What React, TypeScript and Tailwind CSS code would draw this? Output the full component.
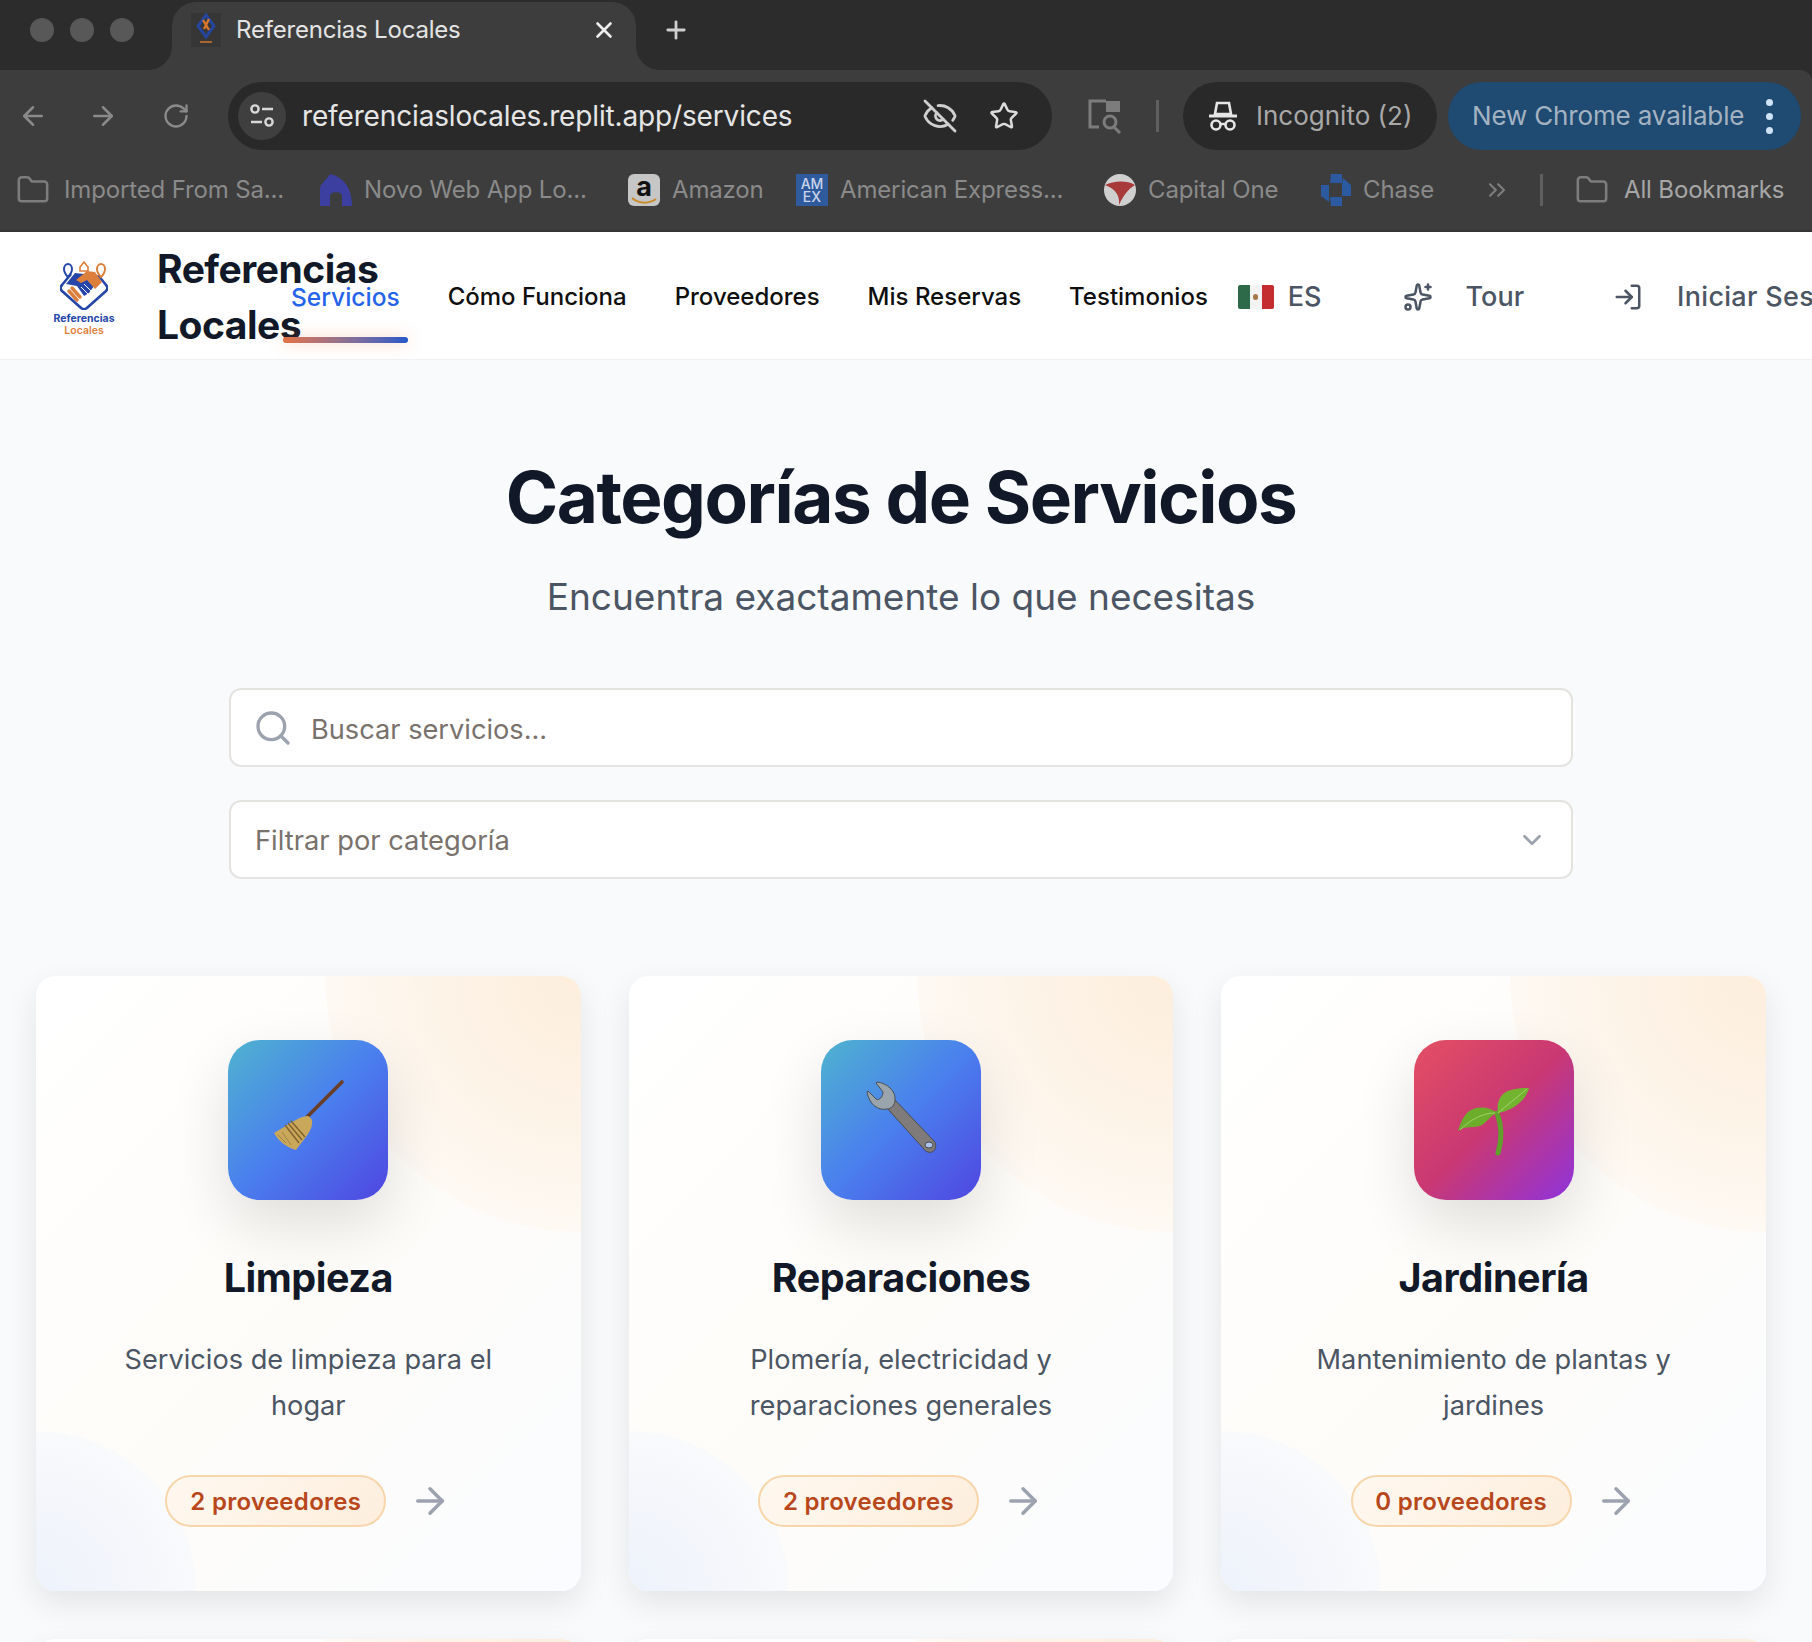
import React from 'react';
import {
  ArrowLeft,
  ArrowRight,
  RotateCw,
  X,
  Plus,
  EyeOff,
  Star,
  Search,
  ChevronDown,
  Sparkles,
  LogIn,
  Folder,
  ChevronsRight,
} from 'lucide-react';

const Bookmark: React.FC<{ icon: React.ReactNode; label: string; className?: string }> = ({ icon, label, className }) => (
  <div className={`flex items-center shrink-0 ${className ?? ''}`}>
    {icon}
    <span className="ml-[12px] text-[24px] leading-none tracking-[-0.15px] text-[#8a8a8a] whitespace-nowrap">{label}</span>
  </div>
);

const ChromeBar: React.FC = () => (
  <div className="bg-[#2c2c2c] h-[232px] shrink-0">
    {/* Tab strip */}
    <div className="h-[70px] flex items-end">
      <div className="flex items-center gap-[16px] pl-[30px] pb-[10px] w-[172px] h-full shrink-0">
        <span className="w-[24px] h-[24px] rounded-full bg-[#585858]" />
        <span className="w-[24px] h-[24px] rounded-full bg-[#585858]" />
        <span className="w-[24px] h-[24px] rounded-full bg-[#585858]" />
      </div>
      <div className="relative w-[464px] h-[68px] bg-[#3d3d3d] rounded-t-[24px] flex items-center pl-[18px] pb-[12px] shrink-0">
        <span className="absolute left-[-24px] bottom-0 w-[24px] h-[24px] bg-[#3d3d3d]">
          <span className="block w-full h-full bg-[#2c2c2c] rounded-br-[24px]" />
        </span>
        <span className="absolute right-[-24px] bottom-0 w-[24px] h-[24px] bg-[#3d3d3d]">
          <span className="block w-full h-full bg-[#2c2c2c] rounded-bl-[24px]" />
        </span>
        <svg width="32" height="36" viewBox="0 0 32 36" className="shrink-0">
          <rect x="1" y="1" width="30" height="34" fill="#363636" />
          <path d="M16 3 L24 14 L16 25 L8 14 Z" fill="none" stroke="#26459c" strokeWidth="3" />
          <path d="M13 8 L19 18 M19 7 L14 17" stroke="#d9772f" strokeWidth="2.4" />
          <rect x="10" y="29" width="12" height="2" fill="#a8652e" />
        </svg>
        <span className="ml-[14px] text-[24px] leading-none tracking-[-0.2px] text-[#e4e4e4] whitespace-nowrap">Referencias Locales</span>
        <X className="ml-auto mr-[19px] text-[#eeeeee]" size={26} strokeWidth={2.4} />
      </div>
      <Plus className="ml-[26px] mb-[26px] text-[#cfcfcf]" size={28} strokeWidth={2.4} />
    </div>

    {/* Toolbar and bookmarks */}
    <div className="h-[162px] bg-[#3d3d3d] rounded-tr-[12px] border-b-2 border-[#353535]">
      <div className="h-[80px] pt-[12px] flex items-center">
        <ArrowLeft className="ml-[18px] text-[#8a8a8a] shrink-0" size={30} strokeWidth={2} />
        <ArrowRight className="ml-[40px] text-[#8a8a8a] shrink-0" size={30} strokeWidth={2} />
        <RotateCw className="ml-[44px] text-[#8a8a8a] shrink-0" size={28} strokeWidth={2} />
        <div className="ml-[38px] w-[824px] h-[68px] rounded-full bg-[#292929] flex items-center pl-[10px] shrink-0">
          <span className="w-[48px] h-[48px] rounded-full bg-[#3f3f3f] flex items-center justify-center shrink-0">
            <svg width="26" height="26" viewBox="0 0 26 26" fill="none" stroke="#d8d8d8" strokeWidth="2.4">
              <circle cx="6" cy="6" r="3.6" />
              <path d="M13 6 H24 M2 19 H13" />
              <circle cx="20" cy="19" r="3.6" />
            </svg>
          </span>
          <span className="ml-[16px] text-[28px] leading-none tracking-[-0.15px] text-[#e6e6e6] whitespace-nowrap">referenciaslocales.replit.app/services</span>
          <EyeOff className="ml-auto text-[#cfcfcf] shrink-0" size={36} strokeWidth={1.9} />
          <Star className="ml-[31px] mr-[33px] text-[#dcdcdc] shrink-0" size={30} strokeWidth={2} />
        </div>
        <svg width="36" height="36" viewBox="0 0 36 36" fill="none" className="ml-[34px] shrink-0">
          <path d="M20 3 H4 V29 H13" stroke="#7c7c7c" strokeWidth="3" />
          <path d="M20 3 H34 V14 H20 Z" fill="#7c7c7c" />
          <circle cx="24" cy="24" r="6" stroke="#7c7c7c" strokeWidth="3" />
          <path d="M28 29 L34 35" stroke="#7c7c7c" strokeWidth="3" />
        </svg>
        <span className="ml-[34px] w-[3px] h-[32px] bg-[#5f5f5f] shrink-0" />
        <div className="ml-[24px] w-[254px] h-[68px] rounded-full bg-[#292929] flex items-center pl-[26px] shrink-0">
          <svg width="28" height="32" viewBox="0 0 28 32" fill="none" className="shrink-0">
            <path d="M8 3 H20 L22 14 H6 Z" stroke="#e6e6e6" strokeWidth="2.6" />
            <path d="M0 16 H28" stroke="#e6e6e6" strokeWidth="3" />
            <circle cx="7" cy="25" r="4.5" stroke="#e6e6e6" strokeWidth="2.6" />
            <circle cx="21" cy="25" r="4.5" stroke="#e6e6e6" strokeWidth="2.6" />
            <path d="M11 24 H17" stroke="#e6e6e6" strokeWidth="2.4" />
          </svg>
          <span className="ml-[19px] text-[26px] leading-none text-[#a8a8a8] whitespace-nowrap">Incognito (2)</span>
        </div>
        <div className="ml-[11px] w-[353px] h-[68px] rounded-full bg-[#1f4a72] flex items-center pl-[24px] shrink-0">
          <span className="text-[26px] leading-none tracking-[-0.15px] text-[#a4b3c2] whitespace-nowrap">New Chrome available</span>
          <span className="ml-auto mr-[28px] flex flex-col gap-[7px]">
            <span className="w-[7px] h-[7px] rounded-full bg-[#cfe3f7]" />
            <span className="w-[7px] h-[7px] rounded-full bg-[#cfe3f7]" />
            <span className="w-[7px] h-[7px] rounded-full bg-[#cfe3f7]" />
          </span>
        </div>
      </div>
      <div className="h-[56px] mt-[12px] flex items-center pl-[16px]">
        <Bookmark
          className="w-[304px]"
          label="Imported From Sa..."
          icon={<Folder className="mr-[2px] text-[#7d7d7d] shrink-0" size={34} strokeWidth={1.8} />}
        />
        <Bookmark
          className="w-[308px]"
          label="Novo Web App Lo..."
          icon={
            <svg width="32" height="32" viewBox="0 0 32 32" className="shrink-0">
              <path d="M0 32 V15 C0 9 6 7 10 0 C24 3 32 14 32 32 H22 V22 C22 17 10 17 10 22 V32 Z" fill="#3d3fa0" />
            </svg>
          }
        />
        <Bookmark
          className="w-[168px]"
          label="Amazon"
          icon={
            <span className="relative w-[32px] h-[32px] rounded-[6px] bg-[#c6c6c6] flex items-start justify-center shrink-0 overflow-hidden">
              <span className="text-[27px] leading-[25px] font-bold text-[#111]">a</span>
              <svg width="26" height="8" viewBox="0 0 26 8" className="absolute bottom-[1px] left-[3px]" fill="none">
                <path d="M1 1 C8 7 18 7 25 2" stroke="#c98a2a" strokeWidth="2" />
              </svg>
            </span>
          }
        />
        <Bookmark
          className="w-[308px]"
          label="American Express..."
          icon={
            <span className="w-[32px] h-[32px] bg-[#2f5a9e] flex flex-col items-center justify-center shrink-0 overflow-hidden">
              <span className="text-[14px] leading-[13px] font-medium text-[#c9d5ea]">AM</span>
              <span className="text-[14px] leading-[13px] font-medium text-[#c9d5ea]">EX</span>
            </span>
          }
        />
        <Bookmark
          className="w-[217px]"
          label="Capital One"
          icon={
            <svg width="32" height="32" viewBox="0 0 32 32" className="shrink-0">
              <circle cx="16" cy="16" r="16" fill="#cfcfcf" />
              <path d="M1 11 C10 7 22 6 31 11 C24 15 19 22 15 31 C16 22 12 15 1 11 Z" fill="#a83a3a" />
            </svg>
          }
        />
        <Bookmark
          className="w-[162px]"
          label="Chase"
          icon={
            <svg width="30" height="32" viewBox="0 0 30 32" className="shrink-0" fill="#2b5aa0">
              <path d="M10 0 H21 V9 H9 Z" />
              <path d="M22 4 L30 11 V22 H21 V10 Z" />
              <path d="M9 23 H21 V32 H10 Z" />
              <path d="M0 10 V22 L8 28 V11 H0 Z" />
            </svg>
          }
        />
        <ChevronsRight className="text-[#7d7d7d] shrink-0" size={28} strokeWidth={1.8} />
        <span className="ml-[29px] w-[3px] h-[32px] bg-[#5f5f5f] shrink-0" />
        <Folder className="ml-[32px] text-[#7d7d7d] shrink-0" size={34} strokeWidth={1.8} />
        <span className="ml-[15px] text-[24px] leading-none tracking-[-0.15px] text-[#a6a6a6] whitespace-nowrap">All Bookmarks</span>
      </div>
    </div>
  </div>
);

const Logo: React.FC = () => (
  <div className="flex flex-col items-center w-[64px] shrink-0 mt-[6px]">
    <svg width="48" height="50" viewBox="0 0 48 50" fill="none">
      <path d="M11 14 L2 25 C0 27 0 29 2 31 L20 47 C23 50 25 50 28 47 L46 31 C48 29 48 27 46 25 L38 15" stroke="#2546a8" strokeWidth="2.6" />
      <path d="M12 9 C12 13 8 17 8 17 C8 17 4 13 4 9 C4 6 6 4 8 4 C10 4 12 6 12 9 Z" stroke="#2546a8" strokeWidth="2" />
      <path d="M45 9 C45 13 41 17 41 17 C41 17 37 13 37 9 C37 6 39 4 41 4 C43 4 45 6 45 9 Z" stroke="#dd7f3c" strokeWidth="2" />
      <path d="M20 7 L24 2 L28 7 V11 H20 Z" stroke="#dd7f3c" strokeWidth="1.6" />
      <path d="M6 24 L15 13 L24 14 L34 26 L29 33 L24 36 L17 26 Z" fill="#2546a8" />
      <path d="M16 20 L27 11 L35 12 L42 22 L35 29 L27 20 L21 23 Z" fill="#dd7f3c" />
      <path d="M12 28 L20 37 M9 31 L17 40" stroke="#dd7f3c" strokeWidth="3.4" strokeLinecap="round" />
      <path d="M24 24 L31 31 M21 27 L28 34" stroke="#fff" strokeWidth="1" />
    </svg>
    <span className="mt-[3px] text-[10.5px] leading-[12px] font-bold text-[#2546a8] whitespace-nowrap">Referencias</span>
    <span className="text-[10.5px] leading-[12px] font-semibold text-[#dd7f3c] whitespace-nowrap">Locales</span>
  </div>
);

const NavBar: React.FC = () => (
  <nav className="h-[128px] bg-white border-b border-[#eef0f3] flex items-center pl-[52px] shrink-0 overflow-hidden">
    <Logo />
    <div className="ml-[41px] w-[165px] shrink-0 text-[39px] leading-[56px] font-bold tracking-[-0.5px] text-[#111827] mt-[3px]">
      <span className="whitespace-nowrap">Referencias</span>
      <br />
      Locales
    </div>
    <div className="relative ml-[-31px] text-[24.5px] leading-none font-medium text-[#2563eb] whitespace-nowrap shrink-0 mt-[2px] mb-[-2px]">
      Servicios
      <span className="absolute left-[-8px] right-[-8px] top-[52px] h-[6px] rounded-full bg-gradient-to-r from-[#e5703f] to-[#2456c8] shadow-[0_0_16px_rgba(229,112,63,0.35)]" />
    </div>
    <div className="ml-[48px] flex items-center gap-[48px] shrink-0 text-[24px] leading-none font-medium text-[#0f0f0f] mt-[2px]">
      <span className="whitespace-nowrap">Cómo Funciona</span>
      <span className="whitespace-nowrap">Proveedores</span>
      <span className="whitespace-nowrap">Mis Reservas</span>
      <span className="whitespace-nowrap">Testimonios</span>
    </div>
    <div className="ml-[30px] flex items-center shrink-0 mt-[2px]">
      <span className="w-[36px] h-[24px] flex rounded-[2px] overflow-hidden shrink-0">
        <span className="flex-1 bg-[#2d6a4a]" />
        <span className="flex-1 bg-[#f3f3f3] flex items-center justify-center">
          <span className="w-[5px] h-[6px] rounded-full bg-[#a5784a]" />
        </span>
        <span className="flex-1 bg-[#c42e30]" />
      </span>
      <span className="ml-[14px] text-[27px] leading-none font-medium text-[#4b5563]">ES</span>
      <Sparkles className="ml-[81px] text-[#4b5563] shrink-0" size={30} strokeWidth={2} />
      <span className="ml-[33px] text-[27px] leading-none font-medium text-[#4b5563]">Tour</span>
      <LogIn className="ml-[89px] text-[#4b5563] shrink-0" size={30} strokeWidth={2} />
      <span className="ml-[34px] text-[27px] leading-none font-medium tracking-[0.3px] text-[#4b5563] whitespace-nowrap">Iniciar Sesión</span>
    </div>
  </nav>
);

const BroomGlyph: React.FC = () => (
  <svg viewBox="0 0 160 160" className="w-full h-full" fill="none">
    <path d="M114 42 L79 77" stroke="#6a3f26" strokeWidth="3.6" strokeLinecap="round" />
    <path d="M79 76 C72 76 60 85 46 93 C51 102 60 108 68 110 C75 100 86 90 84 80 C83 78 81 76 79 76 Z" fill="#c9a85c" />
    <path d="M63 81 L77 97 M60 83 L74 100 M57 85 L71 103" stroke="#80602c" strokeWidth="1.4" />
    <path d="M50 95 L58 103 M54 92 L63 105" stroke="#a5823f" strokeWidth="1" />
  </svg>
);

const WrenchGlyph: React.FC = () => (
  <svg viewBox="0 0 160 160" className="w-full h-full" fill="none">
    <path d="M65 67 L73 59 L113 101 C116 105 115 110 111 112 C107 113 104 111 102 108 Z" fill="#7f7b7a" stroke="#4b4a4c" strokeWidth="1" />
    <path d="M56 42 C66 43 75 51 74 60 C74 65 70 69 66 69 C57 71 48 64 46 52 L47 51 L55 59 C58 61 62 57 62 52 L55 43 Z" fill="#9aa4ac" stroke="#4b4f55" strokeWidth="1" />
    <ellipse cx="108" cy="105" rx="4" ry="3" fill="#a9c3ee" stroke="#4b4a4c" />
  </svg>
);

const SeedlingGlyph: React.FC = () => (
  <svg viewBox="0 0 160 160" className="w-full h-full" fill="none">
    <path d="M83 73 C88 86 88 100 84 113" stroke="#5fa12b" strokeWidth="5" strokeLinecap="round" />
    <path d="M84 73 C82 60 88 52 97 50 C104 48 110 48 115 48 C112 60 100 70 84 73 Z" fill="#72b32f" />
    <path d="M84 73 C92 66 102 58 113 49" stroke="#b6dc7c" strokeWidth="0.8" />
    <path d="M83 73 C74 66 62 66 54 72 C48 78 46 85 44 91 C52 85 60 89 68 85 C74 81 76 76 83 73 Z" fill="#6cae2c" />
    <path d="M81 73 C68 73 56 80 46 90" stroke="#aed873" strokeWidth="0.8" />
  </svg>
);

interface Category {
  title: string;
  desc: string[];
  count: string;
  gradient: string;
  glyph: React.ReactNode;
}

const categories: Category[] = [
  {
    title: 'Limpieza',
    desc: ['Servicios de limpieza para el', 'hogar'],
    count: '2 proveedores',
    gradient: 'bg-[linear-gradient(135deg,#4fb3cf_0%,#4a7fee_50%,#4f46e0_100%)]',
    glyph: <BroomGlyph />,
  },
  {
    title: 'Reparaciones',
    desc: ['Plomería, electricidad y', 'reparaciones generales'],
    count: '2 proveedores',
    gradient: 'bg-[linear-gradient(135deg,#4fb3cf_0%,#4a7fee_50%,#4f46e0_100%)]',
    glyph: <WrenchGlyph />,
  },
  {
    title: 'Jardinería',
    desc: ['Mantenimiento de plantas y', 'jardines'],
    count: '0 proveedores',
    gradient: 'bg-[linear-gradient(135deg,#e44f63_0%,#c93873_50%,#8f33dc_100%)]',
    glyph: <SeedlingGlyph />,
  },
];

const CardBackdrop: React.FC = () => (
  <>
    <span className="absolute right-[-256px] top-[-256px] w-[512px] h-[512px] rounded-full bg-[radial-gradient(closest-side,#fdeedd_0%,#fdf3e7_55%,#fef9f3_100%)]" />
    <span className="absolute left-[-160px] bottom-[-160px] w-[320px] h-[320px] rounded-full bg-[radial-gradient(closest-side,#eef2fb_0%,#f4f6fb_60%,#f9fafc_100%)]" />
  </>
);

const ServiceCard: React.FC<{ category: Category }> = ({ category }) => (
  <div className="relative h-[615px] rounded-[20px] overflow-hidden bg-[linear-gradient(135deg,#ffffff_0%,#fefcf9_50%,#fafcff_100%)] shadow-[0_12px_32px_rgba(0,0,0,0.09)] flex flex-col items-center pt-[64px]">
    <CardBackdrop />
    <div className={`relative w-[160px] h-[160px] rounded-[32px] shrink-0 shadow-[0_24px_60px_rgba(0,0,0,0.12)] ${category.gradient}`}>
      {category.glyph}
    </div>
    <h3 className="relative mt-[54px] text-[39.5px] leading-[48px] font-bold tracking-[-0.45px] text-[#111827]">{category.title}</h3>
    <p className="relative mt-[35px] text-[27.2px] leading-[46px] text-[#4b5563] text-center">
      {category.desc[0]}
      <br />
      {category.desc[1]}
    </p>
    <div className="relative mt-[46px] flex items-center gap-[23px]">
      <span className="w-[221px] h-[52px] pt-[2px] justify-center rounded-full border-2 border-[#f8d6ab] bg-[linear-gradient(135deg,#fff8f0,#fdeedd)] flex items-center text-[24px] tracking-[0.3px] font-semibold text-[#b9471c] whitespace-nowrap">
        {category.count}
      </span>
      <ArrowRight className="text-[#9ca3af]" size={42} strokeWidth={2} />
    </div>
  </div>
);

const EmptyCard: React.FC = () => (
  <div className="relative h-[615px] rounded-[20px] overflow-hidden bg-[linear-gradient(135deg,#ffffff_0%,#fefcf9_50%,#fafcff_100%)] shadow-[0_12px_32px_rgba(0,0,0,0.09)]">
    <CardBackdrop />
  </div>
);

export default function App() {
  return (
    <div className="h-[1642px] w-full overflow-hidden flex flex-col bg-[#f8fafc] [font-family:Inter,sans-serif]">
      <ChromeBar />
      <NavBar />
      <main className="pl-[36px] pr-[46px] flex flex-col">
        <h1 className="mt-[97px] text-center text-[71px] leading-[80px] font-bold tracking-[-1.5px] text-[#111827]">
          Categorías de Servicios
        </h1>
        <p className="mt-[36px] mb-[1px] text-center text-[37px] leading-[48px] text-[#4b5563]">
          Encuentra exactamente lo que necesitas
        </p>

        <div className="mt-[66px] mx-auto w-[1344px] flex flex-col gap-[33px]">
          <div className="h-[79px] rounded-[12px] border-2 border-[#e5e3e0] bg-white flex items-center pl-[22px]">
            <Search className="text-[#9ca3af] shrink-0" size={40} strokeWidth={2} />
            <input
              className="ml-[18px] flex-1 pt-[5px] bg-transparent outline-none text-[27.2px] text-[#111827] placeholder:text-[#78716c]"
              placeholder="Buscar servicios..."
            />
          </div>
          <div className="h-[79px] pt-[3px] rounded-[12px] border-2 border-[#e5e3e0] bg-white flex items-center pl-[24px] pr-[24px]">
            <span className="text-[27.3px] text-[#78716c]">Filtrar por categoría</span>
            <ChevronDown className="ml-auto -mt-[3px] text-[#9ca3af]" size={30} strokeWidth={2.2} />
          </div>
        </div>

        <div className="mt-[97px] grid grid-cols-3 gap-x-[48px] gap-y-[48px]">
          {categories.map((category) => (
            <ServiceCard key={category.title} category={category} />
          ))}
          <EmptyCard />
          <EmptyCard />
          <EmptyCard />
        </div>
      </main>
    </div>
  );
}
